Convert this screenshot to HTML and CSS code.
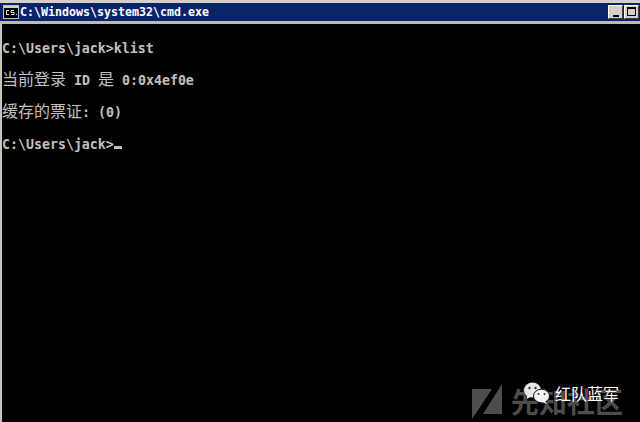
FILE: index.html
```html
<!DOCTYPE html>
<html lang="zh">
<head>
<meta charset="utf-8">
<title>cmd.exe</title>
<link rel="stylesheet" href="styles.css">
</head>
<body>
<div class="window">
  <div class="titlebar">
    <svg class="app-icon" width="16" height="14" viewBox="0 0 16 14"><rect x="0.5" y="0.5" width="15" height="13" fill="#000" stroke="#c0c0c0"/><rect x="1" y="1" width="14" height="2" fill="#d4d0c8"/><path d="M6 5.500H3.500V9.500H6M8 5.500H11M8 5.500V7.500H11V9.500H8M13 9.500h1" fill="none" stroke="#e8e8e8"/></svg>
    <span class="title">C:\Windows\system32\cmd.exe</span>
    <div class="controls">
      <div class="ctl"><span class="min"></span></div>
      <div class="ctl"><span class="max"></span></div>
    </div>
  </div>
  <div class="console">
    <div class="line"></div>
    <div class="line">C:\Users\jack&gt;klist</div>
    <div class="line"></div>
    <div class="line"><span class="cjk">当前登录</span> ID <span class="cjk">是</span> 0:0x4ef0e</div>
    <div class="line"></div>
    <div class="line"><span class="cjk">缓存的票证</span>: (0)</div>
    <div class="line"></div>
    <div class="line">C:\Users\jack&gt;<span class="cursor"></span></div>
  </div>
</div>
<div class="mark">
  <svg class="mark-logo" width="30" height="36" viewBox="0 0 30 36"><path d="M0 5H20L0 35ZM30 0V30H11Z" fill="#4d4d4d"/></svg>
  <span class="mark-text">先知社区</span>
  <div class="wechat">
    <svg width="26" height="22" viewBox="0 0 26 22"><ellipse cx="8.500" cy="8" rx="8.500" ry="7.500" fill="#e6e6e6"/><path d="M3 12v5l5-3z" fill="#e6e6e6"/><ellipse cx="17.500" cy="14" rx="8" ry="6.800" fill="#f2f2f2" stroke="#111" stroke-width="1"/><path d="M21 19l2 3-5-2z" fill="#f2f2f2"/><circle cx="5.500" cy="6" r="1.200" fill="#333"/><circle cx="11.500" cy="6" r="1.200" fill="#333"/><circle cx="14.500" cy="12" r="1" fill="#333"/><circle cx="20.500" cy="12" r="1" fill="#333"/></svg>
    <span class="wechat-text">红队蓝军</span>
  </div>
</div>
</body>
</html>
```
FILE: styles.css
```css
html, body { margin: 0; padding: 0; width: 640px; height: 422px; overflow: hidden; background: #000; }
.window { width: 640px; height: 422px; box-sizing: border-box; border-left: 2px solid #c8c4bc; background: #000; display: flex; flex-direction: column; }
.titlebar { margin-left: -2px; height: 24px; box-sizing: border-box; background: #0a246a; border-top: 3px solid #d4d0c8; border-bottom: 3px solid #bdbab3; display: flex; align-items: center; padding: 0 1px 0 3px; gap: 1px; flex: none; }
.app-icon { flex: none; }
.title { color: #fff; font: bold 11.63px "DejaVu Sans Mono", "Liberation Mono", monospace; white-space: nowrap; }
.controls { margin-left: auto; display: flex; gap: 1px; }
.ctl { width: 15px; height: 14px; box-sizing: border-box; background: #d4d0c8; border: 1px solid; border-color: #fff #404040 #404040 #fff; display: flex; justify-content: center; }
.min { width: 6px; height: 2px; background: #000; align-self: flex-end; margin-bottom: 1px; }
.max { width: 9px; height: 9px; box-sizing: border-box; border: 1px solid #000; border-top-width: 2px; margin-top: 1px; }
.console { color: #c0c0c0; font: bold 13.28px/16px "DejaVu Sans Mono", "Noto Sans CJK SC", monospace; padding-top: 1px; }
.line { height: 16px; white-space: pre; }
.cjk { font: 400 16px/0 "Noto Sans CJK SC", sans-serif; }
.cursor { display: inline-block; width: 8px; height: 3px; background: #c0c0c0; }
.mark { position: absolute; left: 472px; top: 384px; width: 168px; height: 38px; }
.mark-logo { position: absolute; left: 0; top: 0; }
.mark-text { position: absolute; left: 39px; top: -3px; color: #4d4d4d; font: 700 28px/40px "Noto Sans CJK SC", sans-serif; white-space: nowrap; }
.wechat { position: absolute; left: 0; top: 0; }
.wechat svg { position: absolute; left: 52px; top: -2px; }
.wechat-text { position: absolute; left: 83px; top: -3px; color: #fff; font: 400 16px/24px "Noto Sans CJK SC", sans-serif; white-space: nowrap; }
```
